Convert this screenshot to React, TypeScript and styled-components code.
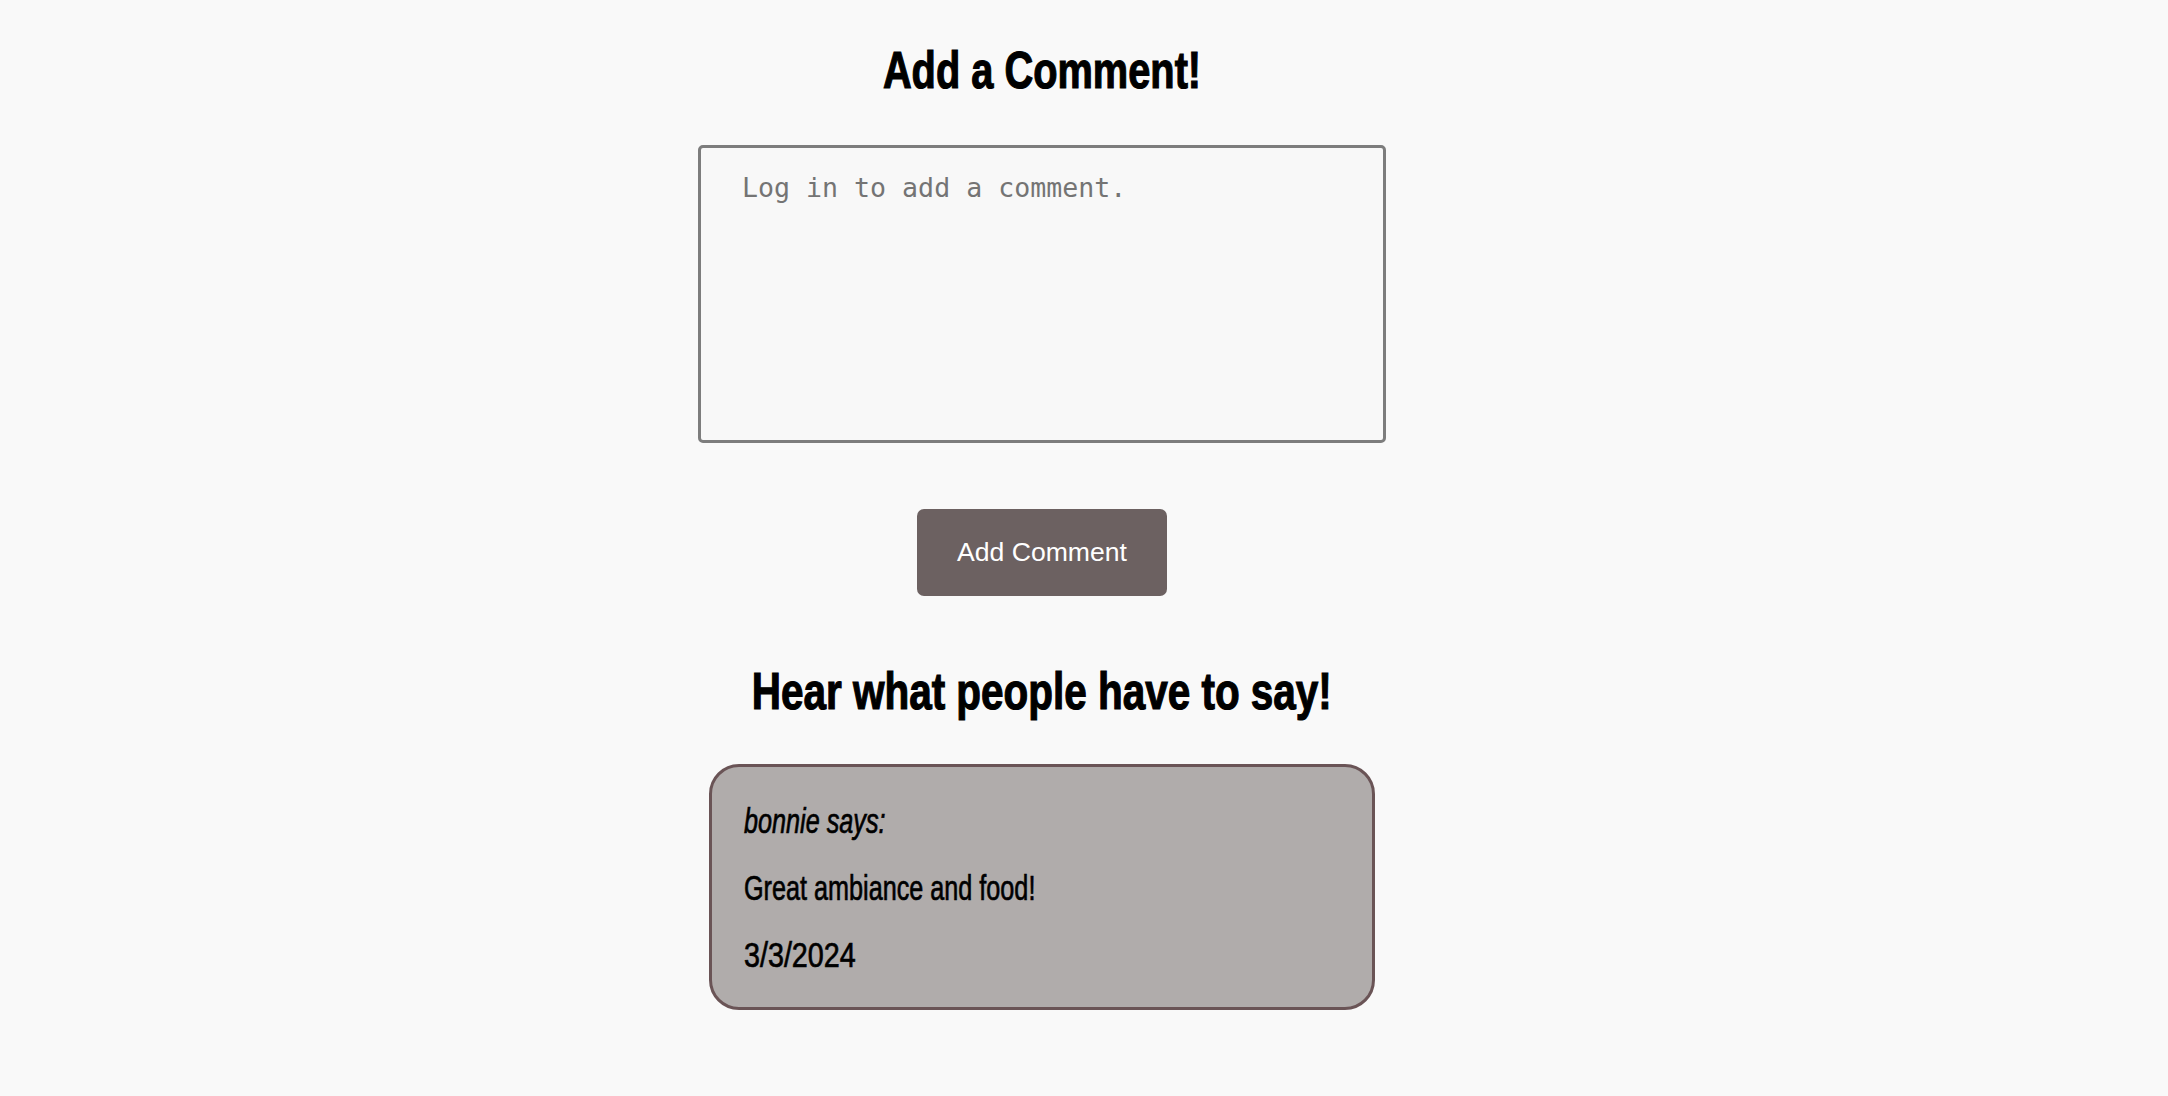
import React from "react";
import styled, { createGlobalStyle } from "styled-components";

const GlobalStyle = createGlobalStyle`
  html, body {
    margin: 0;
    padding: 0;
    background: #f9f9f9;
  }
  body {
    font-family: "Liberation Sans", Arial, sans-serif;
    color: #000;
  }
  * { box-sizing: border-box; }
`;

const Page = styled.main`
  width: 100%;
  min-height: 1096px;
  padding: 40px 84px 0 0;
  display: flex;
  flex-direction: column;
  align-items: center;
`;

const Heading = styled.h2<{ $gapBelow: number }>`
  margin: 0 0 ${(p) => p.$gapBelow}px;
  font-family: "Liberation Sans", Arial, sans-serif;
  font-weight: 700;
  font-size: 52px;
  line-height: 60px;
  white-space: nowrap;
  -webkit-text-stroke: 1.2px #000;
`;

const Squeezed = styled.span<{ $x: number; $origin?: string }>`
  display: inline-block;
  transform: scaleX(${(p) => p.$x});
  transform-origin: ${(p) => p.$origin || "center"};
`;

const CommentBox = styled.textarea`
  display: block;
  width: 688px;
  height: 298px;
  margin: 0 0 66px;
  padding: 24px 41px;
  border: 3px solid #7d7d7d;
  border-radius: 5px;
  background: #f8f8f8;
  font-family: "DejaVu Sans Mono", monospace;
  font-size: 26.6px;
  color: #333;
  resize: none;
  outline: none;
  &::placeholder {
    color: #747474;
  }
`;

const SubmitButton = styled.button`
  margin: 0 0 65px;
  padding: 28px 40px;
  border: none;
  border-radius: 7px;
  background: #6c6161;
  color: #fff;
  font-family: "Liberation Sans", Arial, sans-serif;
  font-size: 26.6px;
  line-height: normal;
  cursor: pointer;
`;

const CommentList = styled.section`
  display: flex;
  flex-direction: column;
  align-items: center;
  gap: 24px;
`;

const CommentCard = styled.article`
  width: 666px;
  padding: 20px 32px 19px;
  border: 3px solid #6a5456;
  border-radius: 30px;
  background: #b0acab;
  display: flex;
  flex-direction: column;
`;

const CardLine = styled.p<{ $italic?: boolean }>`
  margin: 0;
  font-family: "Liberation Sans", Arial, sans-serif;
  font-size: 35px;
  line-height: 67px;
  font-style: ${(p) => (p.$italic ? "italic" : "normal")};
  white-space: nowrap;
  -webkit-text-stroke: 0.7px #000;
`;

type Comment = { user: string; text: string; date: string };

const comments: Comment[] = [
  { user: "bonnie", text: "Great ambiance and food!", date: "3/3/2024" },
];

export default function App() {
  return (
    <>
      <GlobalStyle />
      <Page>
        <Heading $gapBelow={45}>
          <Squeezed $x={0.765}>Add a Comment!</Squeezed>
        </Heading>
        <CommentBox placeholder="Log in to add a comment." />
        <SubmitButton type="button">Add Comment</SubmitButton>
        <Heading $gapBelow={43}>
          <Squeezed $x={0.778}>Hear what people have to say!</Squeezed>
        </Heading>
        <CommentList>
          {comments.map((c, i) => (
            <CommentCard key={i}>
              <CardLine $italic>
                <Squeezed $x={0.72} $origin="left">{c.user} says:</Squeezed>
              </CardLine>
              <CardLine>
                <Squeezed $x={0.72} $origin="left">{c.text}</Squeezed>
              </CardLine>
              <CardLine>
                <Squeezed $x={0.82} $origin="left">{c.date}</Squeezed>
              </CardLine>
            </CommentCard>
          ))}
        </CommentList>
      </Page>
    </>
  );
}
